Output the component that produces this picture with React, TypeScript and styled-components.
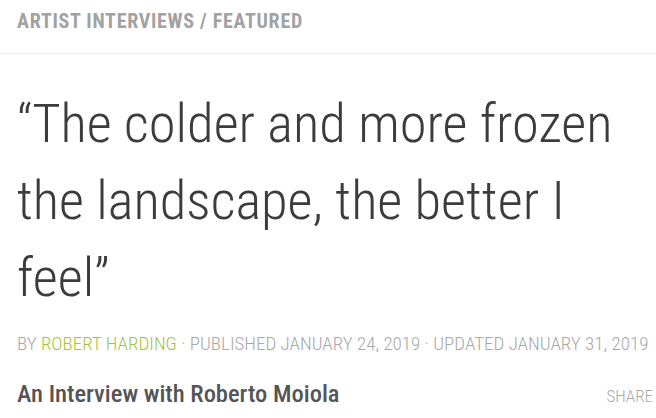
import React from "react";
import styled, { createGlobalStyle } from "styled-components";

const GlobalStyle = createGlobalStyle`
  html, body { margin: 0; padding: 0; background: #ffffff; }
  body { font-family: "Roboto Condensed", "Liberation Sans Narrow", sans-serif; }
`;

const Page = styled.div`
  width: 656px;
  height: 418px;
  overflow: hidden;
  background: #fff;
`;

const Header = styled.header`
  padding: 11px 17px 22px;
  border-bottom: 1px solid #ececec;
`;

const Breadcrumb = styled.div`
  font-size: 20px;
  line-height: 20px;
  font-weight: 700;
  letter-spacing: 0.7px;
  color: #a2a2a2;
  text-transform: uppercase;
  white-space: nowrap;
`;

const Article = styled.article`
  padding: 31px 17px 0;
`;

const Title = styled.h1`
  margin: 0;
  font-size: 54.5px;
  line-height: 77px;
  font-weight: 300;
  color: #3c3c3c;
  width: 605px;
`;

const Meta = styled.div`
  margin-top: 18px;
  font-size: 19px;
  line-height: 19px;
  font-weight: 300;
  color: #a8a8a8;
  text-transform: uppercase;
  white-space: nowrap;
`;

const Author = styled.span`
  color: #9fc43d;
`;

const SubRow = styled.div`
  margin-top: 29px;
  display: flex;
  align-items: baseline;
  justify-content: space-between;
  margin-right: -14px;
`;

const Subtitle = styled.h2`
  margin: 0;
  font-size: 24.5px;
  line-height: 24px;
  font-weight: 500;
  color: #555;
`;

const Share = styled.span`
  font-size: 17px;
  line-height: 17px;
  font-weight: 300;
  color: #aaa;
  text-transform: uppercase;
`;

export default function App() {
  return (
    <Page>
      <GlobalStyle />
      <Header>
        <Breadcrumb>Artist Interviews / Featured</Breadcrumb>
      </Header>
      <Article>
        <Title>“The colder and more frozen the landscape, the better I feel”</Title>
        <Meta>
          By <Author>Robert Harding</Author> · Published January 24, 2019 · Updated January 31, 2019
        </Meta>
        <SubRow>
          <Subtitle>An Interview with Roberto Moiola</Subtitle>
          <Share>Share</Share>
        </SubRow>
      </Article>
    </Page>
  );
}
